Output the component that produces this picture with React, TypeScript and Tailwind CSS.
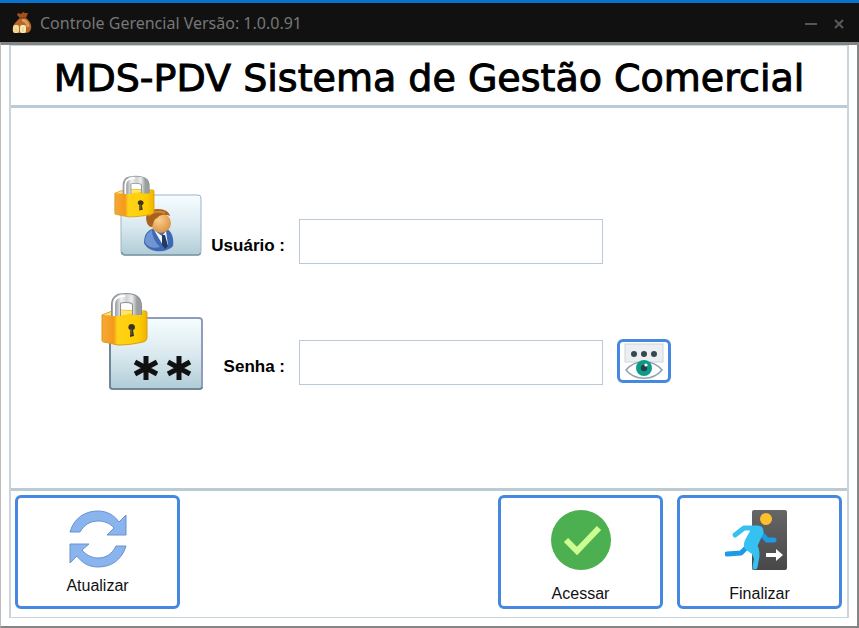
import { useState, type ReactNode } from "react";

function MoneyBagIcon() {
  return (
    <svg viewBox="0 0 20 23" className="h-[23px] w-5" aria-hidden="true">
      <path d="M6 2l3 1 2-2 2 1h3l-2 5H8L5 4z" fill="#a5501c" />
      <path d="M8 7h6c4 3 6 7 5 11-1 3-3 4-6 4H4c-3 0-4-2-3-6 1-4 4-6 7-9z" fill="#b8672c" />
      <path d="M10 9c3 0 6 3 6 7" stroke="#dc9a58" strokeWidth="3" fill="none" />
      <path d="M8 7h6" stroke="#6e3210" strokeWidth="1" />
      <rect x="1" y="14" width="6" height="8" rx="2" fill="#f1dc9a" />
      <rect x="8" y="14" width="6" height="8" rx="2" fill="#f8e9b4" />
      <path d="M4 17v4M11 16v5" stroke="#e6cd80" />
    </svg>
  );
}

function IconGradients({ id }: { id: string }) {
  return (
    <defs>
      <linearGradient id={`${id}-card`} x1="0" y1="0" x2="0" y2="1">
        <stop offset="0" stopColor="#f6fdff" />
        <stop offset="0.5" stopColor="#dbeaf0" />
        <stop offset="1" stopColor="#b0ccd6" />
      </linearGradient>
      <linearGradient id={`${id}-gold`} x1="0" y1="0" x2="1" y2="0">
        <stop offset="0" stopColor="#f6a83a" />
        <stop offset="0.26" stopColor="#f39a1a" />
        <stop offset="0.34" stopColor="#ffd21a" />
        <stop offset="0.8" stopColor="#ffce00" />
        <stop offset="1" stopColor="#efb400" />
      </linearGradient>
      <linearGradient id={`${id}-steel`} x1="0" y1="0" x2="1" y2="0">
        <stop offset="0" stopColor="#a4a7aa" />
        <stop offset="0.25" stopColor="#f2f3f4" />
        <stop offset="0.5" stopColor="#cfd1d3" />
        <stop offset="0.75" stopColor="#eceded" />
        <stop offset="1" stopColor="#9b9ea1" />
      </linearGradient>
      <radialGradient id={`${id}-face`} cx="0.4" cy="0.35" r="0.7">
        <stop offset="0" stopColor="#fbd08e" />
        <stop offset="1" stopColor="#d98f42" />
      </radialGradient>
    </defs>
  );
}

function Padlock({ id }: { id: string }) {
  return (
    <>
      <path d="M1 23L14 18l30 1c2 0 2 1 2 3v23c0 3-1 4-4 5-9 2-16 3-25 3L3 50c-2 0-2-1-2-3z" fill={`url(#${id}-gold)`} stroke="#d99a14" />
      <path d="M2 23l13-5 29 1-27 5z" fill="#ffe56e" />
      <path d="M15 24V13C15 7 18 6 25 6s11 2 11 8v9" fill="none" stroke="#8c8f92" strokeWidth="10" />
      <path d="M15 24V13C15 7 18 6 25 6s11 2 11 8v9" fill="none" stroke={`url(#${id}-steel)`} strokeWidth="8" />
      <path d="M13 24V12c0-5 3-8 11-8" fill="none" stroke="#fff" strokeWidth="2" />
      <path d="M28 33c2-2 6-1 6 2 0 2-1 3-2 3l1 6-4 1v-7c-2-1-2-3-1-5z" fill="#3b3425" />
      <path d="M30 37v6" stroke="#8a7a42" />
    </>
  );
}

function UserLockIcon() {
  return (
    <svg viewBox="0 0 104 89" className="h-[89px] w-[104px]" aria-hidden="true">
      <IconGradients id="user" />
      <rect x="20" y="20" width="80" height="60" rx="3" fill="url(#user-card)" stroke="#9fb2c9" strokeWidth="1" />
      <path d="M21 77q0 3 3 3h73q2 0 2-2" fill="none" stroke="#7d97a4" strokeWidth="1.5" />
      <path d="M43 68c0-8 3-12 8-14h15c5 3 7 9 6 17-6 7-24 8-29-3z" fill="#3f69b4" />
      <path d="M44 67c0-6 3-10 7-12 0 6 3 12 8 17-6 2-13 0-15-5z" fill="#6f95d3" />
      <path d="M53 55l8 6 4-5 2 14-4 2z" fill="#f3f7fc" />
      <path d="M61 60l3 0 3 11-3 3-3-4z" fill="#25395f" />
      <ellipse cx="60" cy="48" rx="10" ry="10" fill="url(#user-face)" />
      <path d="M46 48c-3-9 2-14 11-14 7 0 11 3 12 7-4-2-8-1-11 0-2 3-4 2-5 5l-2 6c-3 0-4-2-5-4z" fill="#a9621c" />
      <path d="M48 41c3-5 11-5 16-3" stroke="#cf8a38" strokeWidth="2" fill="none" />
      <g transform="translate(13 0) scale(.87 .79)">
        <Padlock id="user" />
      </g>
    </svg>
  );
}

function PasswordLockIcon() {
  return (
    <svg viewBox="0 0 104 99" className="h-[99px] w-[104px]" aria-hidden="true">
      <IconGradients id="pass" />
      <rect x="9" y="26" width="92" height="71" rx="3" fill="url(#pass-card)" stroke="#8f9dbb" strokeWidth="2" />
      <path d="M9 40v55q0 2 3 2h87q2 0 2-2" fill="none" stroke="#66818f" strokeWidth="1.5" />
      <g stroke="#111" strokeWidth="5">
        <path d="M45 64v24M34 70l22 12M34 82l22-12" />
        <path d="M78 64v24M67 70l22 12M67 82l22-12" />
      </g>
      <g fill="#111">
        <circle cx="45" cy="76" r="4" />
        <circle cx="78" cy="76" r="4" />
      </g>
      <Padlock id="pass" />
    </svg>
  );
}

function ShowPasswordIcon() {
  return (
    <svg viewBox="0 0 40 38" className="h-[38px] w-10" aria-hidden="true">
      <rect x="1" y="2" width="38" height="18" fill="#eceff1" stroke="#cfd6da" />
      <circle cx="10" cy="12" r="3" fill="#37474f" />
      <circle cx="20" cy="12" r="3" fill="#37474f" />
      <circle cx="30" cy="12" r="3" fill="#37474f" />
      <path d="M2 28C11 17 29 17 38 28 29 39 11 39 2 28z" fill="#fff" stroke="#90a4ae" strokeWidth="1.5" />
      <circle cx="20" cy="26" r="8" fill="#0b9b88" />
      <circle cx="20" cy="26" r="3.2" fill="#2c3e45" />
      <circle cx="22" cy="23" r="1.6" fill="#fff" />
    </svg>
  );
}

function RefreshIcon() {
  return (
    <svg viewBox="0 0 58 58" className="size-[58px]" aria-hidden="true">
      <g fill="#8ab4ee" stroke="#6892cd" strokeWidth="1">
        <path d="M1 22C5 8 16 1 29 1c9 0 16 4 21 11l7-7v20H38l7-7c-4-5-10-7-16-7-8 0-14 4-18 11z" />
        <path d="M57 36C53 50 42 57 29 57c-9 0-16-4-21-11l-7 7V34h19l-7 6c4 5 10 8 16 8 8 0 14-4 18-12z" />
      </g>
    </svg>
  );
}

function CheckIcon() {
  return (
    <svg viewBox="0 0 60 60" className="size-[60px]" aria-hidden="true">
      <circle cx="30" cy="30" r="30" fill="#4caf50" />
      <path d="M15 30L26 41 48 18" fill="none" stroke="#ccff90" strokeWidth="6" />
    </svg>
  );
}

function ExitIcon() {
  return (
    <svg viewBox="0 0 70 60" className="h-[60px] w-[70px]" aria-hidden="true">
      <defs>
        <linearGradient id="door" x1="0" y1="0" x2="0" y2="1">
          <stop offset="0" stopColor="#666" />
          <stop offset="1" stopColor="#484848" />
        </linearGradient>
      </defs>
      <rect x="27" y="0" width="35" height="60" rx="2" fill="url(#door)" />
      <circle cx="41" cy="9" r="6" fill="#fbc02d" />
      <g fill="none" strokeLinecap="round" strokeLinejoin="round">
        <path d="M35 22l7 8h7" stroke="#1e9be6" strokeWidth="5" />
        <path d="M22 37l-6 6-14 1" stroke="#1e9be6" strokeWidth="5" />
        <path d="M10 25l9-7h14" stroke="#35c1f1" strokeWidth="5" />
        <path d="M31 38l1 8-2 11" stroke="#35c1f1" strokeWidth="5" />
      </g>
      <path d="M25 16h10c3 1 4 4 3 8l-6 13c2 2 3 5 2 8l-5 4-2-5-7-5c-2-3-1-6 0-9l5-9z" fill="#35c1f1" />
      <path d="M41 43h10v-4l7 6-7 6v-4H41z" fill="#fff" />
    </svg>
  );
}

type ActionProps = {
  label: string;
  icon: ReactNode;
  spacing?: string;
};

function ActionButton({ label, icon, spacing = "gap-3.5" }: ActionProps) {
  return (
    <button
      type="button"
      className={`flex h-[114px] w-[165px] flex-col items-center rounded-md border-3 border-[#4488df] bg-white pt-3 text-base leading-5 text-[#111] ${spacing}`}
    >
      {icon}
      {label}
    </button>
  );
}

export default function App() {
  const [visible, setVisible] = useState(false);
  const field = "ml-3.5 h-[45px] w-[304px] border border-[#b9cad6] bg-white px-2 text-lg outline-none";
  const label = "w-20 pb-2 text-right text-[17px] leading-5 font-bold";

  return (
    <div className="flex min-h-screen flex-col border-t-3 border-[#0872cc] bg-white font-['Liberation_Sans',Arial,sans-serif] text-black">
      <header className="flex h-[39px] items-center bg-[#111] px-3">
        <MoneyBagIcon />
        <span className="ml-2 flex-1 font-['Noto_Sans',sans-serif] text-base text-[#777]">
          Controle Gerencial Versão: 1.0.0.91
        </span>
        <button type="button" aria-label="Minimizar" className="mr-3 flex size-4 items-center justify-center">
          <svg viewBox="0 0 12 12" className="size-3" aria-hidden="true">
            <path d="M0 7h12" stroke="#555" strokeWidth="2" />
          </svg>
        </button>
        <button type="button" aria-label="Fechar" className="flex size-4 items-center justify-center">
          <svg viewBox="0 0 12 12" className="size-3" aria-hidden="true">
            <path d="M2 3l8 8M10 3l-8 8" stroke="#5a5a5a" strokeWidth="2" />
          </svg>
        </button>
      </header>

      <div className="flex flex-1 flex-col border-t-3 border-r-2 border-b-2 border-l border-[#858585] border-l-[#bdbdbd] px-2 pb-2">
        <main className="flex flex-1 flex-col border-2 border-t border-b border-[#c8d5dd]">
          <h1 className="flex h-[62px] items-center justify-center border-b-3 border-[#bccad4] pt-1 font-['DejaVu_Sans',Verdana,sans-serif] text-[38px] leading-none whitespace-nowrap [-webkit-text-stroke:1px]">
            MDS-PDV Sistema de Gestão Comercial
          </h1>

          <form className="flex flex-1 flex-col gap-7 pt-[67px] pl-[90px]">
            <div className="flex items-end">
              <UserLockIcon />
              <label htmlFor="user" className={label}>
                Usuário :
              </label>
              <input id="user" type="text" className={field} />
            </div>
            <div className="flex items-end pb-1.5">
              <div className="-mb-1.5">
                <PasswordLockIcon />
              </div>
              <label htmlFor="password" className={label}>
                Senha :
              </label>
              <input id="password" type={visible ? "text" : "password"} className={field} />
              <button
                type="button"
                aria-label="Mostrar senha"
                onClick={() => setVisible(!visible)}
                className="mb-0.5 ml-3.5 flex h-11 w-[54px] items-center justify-center rounded-md border-3 border-[#4488df] bg-white"
              >
                <ShowPasswordIcon />
              </button>
            </div>
          </form>

          <footer className="flex gap-3.5 border-t-3 border-[#bccad4] pt-1 pr-[5px] pb-2 pl-1">
            <ActionButton label="Atualizar" icon={<RefreshIcon />} spacing="gap-2" />
            <div className="ml-auto flex gap-3.5">
              <ActionButton label="Acessar" icon={<CheckIcon />} />
              <ActionButton label="Finalizar" icon={<ExitIcon />} />
            </div>
          </footer>
        </main>
      </div>
    </div>
  );
}
